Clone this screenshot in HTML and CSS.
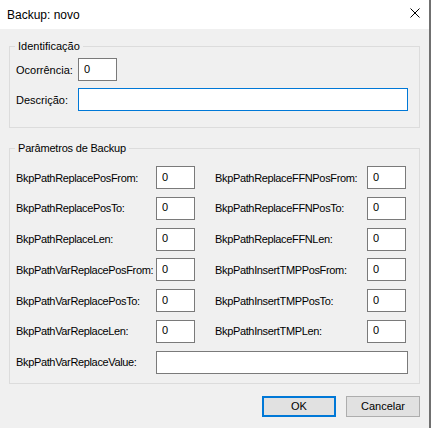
FILE: index.html
```html
<!DOCTYPE html>
<html lang="pt-BR">
<head>
    <meta charset="UTF-8">
    <title>Backup: novo</title>
    <link rel="stylesheet" href="styles.css">
</head>
<body>
    <div class="dialog">
        <div class="titlebar">
            <span class="title">Backup: novo</span>
            <button class="close" title="Fechar">
                <svg width="10" height="10" viewBox="0 0 10 10">
                    <path d="M0.5 0.5 L9.5 9.5 M9.5 0.5 L0.5 9.5" stroke="#000" stroke-width="1" fill="none"/>
                </svg>
            </button>
        </div>

        <div class="content">
            <fieldset class="group group-id">
                <legend>Identificação</legend>
                <div class="id-grid">
                    <label for="ocorrencia">Ocorrência:</label>
                    <input id="ocorrencia" class="field num" value="0">
                    <label for="descricao">Descrição:</label>
                    <input id="descricao" class="field desc focused">
                </div>
            </fieldset>

            <fieldset class="group group-params">
                <legend>Parâmetros de Backup</legend>
                <div class="param-grid">
                    <label>BkpPathReplacePosFrom:</label>
                    <input class="field num" value="0">
                    <label class="right">BkpPathReplaceFFNPosFrom:</label>
                    <input class="field num" value="0">

                    <label>BkpPathReplacePosTo:</label>
                    <input class="field num" value="0">
                    <label class="right">BkpPathReplaceFFNPosTo:</label>
                    <input class="field num" value="0">

                    <label>BkpPathReplaceLen:</label>
                    <input class="field num" value="0">
                    <label class="right">BkpPathReplaceFFNLen:</label>
                    <input class="field num" value="0">

                    <label>BkpPathVarReplacePosFrom:</label>
                    <input class="field num" value="0">
                    <label class="right">BkpPathInsertTMPPosFrom:</label>
                    <input class="field num" value="0">

                    <label>BkpPathVarReplacePosTo:</label>
                    <input class="field num" value="0">
                    <label class="right">BkpPathInsertTMPPosTo:</label>
                    <input class="field num" value="0">

                    <label>BkpPathVarReplaceLen:</label>
                    <input class="field num" value="0">
                    <label class="right">BkpPathInsertTMPLen:</label>
                    <input class="field num" value="0">

                    <label>BkpPathVarReplaceValue:</label>
                    <input class="field value">
                </div>
            </fieldset>

            <div class="actions">
                <button class="btn default">OK</button>
                <button class="btn">Cancelar</button>
            </div>
        </div>
    </div>
</body>
</html>
```

FILE: styles.css
```css
:root {
    --face-color: #f0f0f0;
    --group-border: #dcdcdc;
    --field-border: #7a7a7a;
    --focus-color: #0078d7;
    --button-face: #e1e1e1;
    --button-border: #adadad;
}

body {
    margin: 0;
    background-color: #ffffff;
    font-family: 'Liberation Sans', Arial, sans-serif;
    font-size: 11px;
    color: #000000;
}

.dialog {
    width: 429px;
    height: 428px;
    border-right: 2px solid #707070;
    background-color: var(--face-color);
    display: flex;
    flex-direction: column;
}

/* barra de título */
.titlebar {
    height: 29px;
    background-color: #ffffff;
    display: flex;
    align-items: center;
    padding-left: 7px;
}

.title {
    font-size: 12px;
}

.close {
    margin-left: auto;
    margin-right: 9px;
    margin-bottom: 3px;
    width: 10px;
    height: 10px;
    padding: 0;
    border: none;
    background: none;
    display: flex;
}

.content {
    padding: 10px 9px 0 9px;
}

/* caixas de grupo */
.group {
    margin: 0;
    padding: 0 6px;
    border: 1px solid var(--group-border);
    min-width: 0;
}

.group legend {
    padding: 0 3px;
    margin-left: -1px;
    line-height: 14px;
}

.group-id {
    padding-top: 5px;
    padding-bottom: 16px;
}

.group-params {
    margin-top: 13px;
    padding-top: 11px;
    padding-bottom: 9px;
}

.group-params legend {
    letter-spacing: -0.2px;
}

label {
    white-space: nowrap;
}

.field {
    box-sizing: border-box;
    height: 23px;
    margin: 0;
    padding: 0 5px 2px 5px;
    border: 1px solid var(--field-border);
    border-radius: 0;
    background-color: #ffffff;
    font-family: inherit;
    font-size: 11px;
    color: #000000;
    outline: none;
}

.field.num {
    width: 39px;
}

.field.desc {
    width: 330px;
}

.field.value {
    width: 252px;
}

.field.focused {
    border-color: var(--focus-color);
}

.id-grid {
    display: grid;
    grid-template-columns: 62px auto;
    row-gap: 7px;
    align-items: center;
}

.param-grid {
    display: grid;
    grid-template-columns: 140px 39px 172px 39px;
    row-gap: 7.8px;
    align-items: center;
}

.param-grid label {
    letter-spacing: -0.35px;
}

.param-grid .right {
    padding-left: 20px;
}

.param-grid .value {
    grid-column: 2 / -1;
}

/* botões */
.actions {
    display: flex;
    justify-content: flex-end;
    gap: 10px;
    margin-top: 12px;
}

.btn {
    box-sizing: border-box;
    width: 74px;
    height: 21px;
    padding: 0;
    border: 1px solid var(--button-border);
    border-radius: 0;
    background-color: var(--button-face);
    font-family: inherit;
    font-size: 11px;
    color: #000000;
}

.btn.default {
    border: 2px solid var(--focus-color);
}
```
